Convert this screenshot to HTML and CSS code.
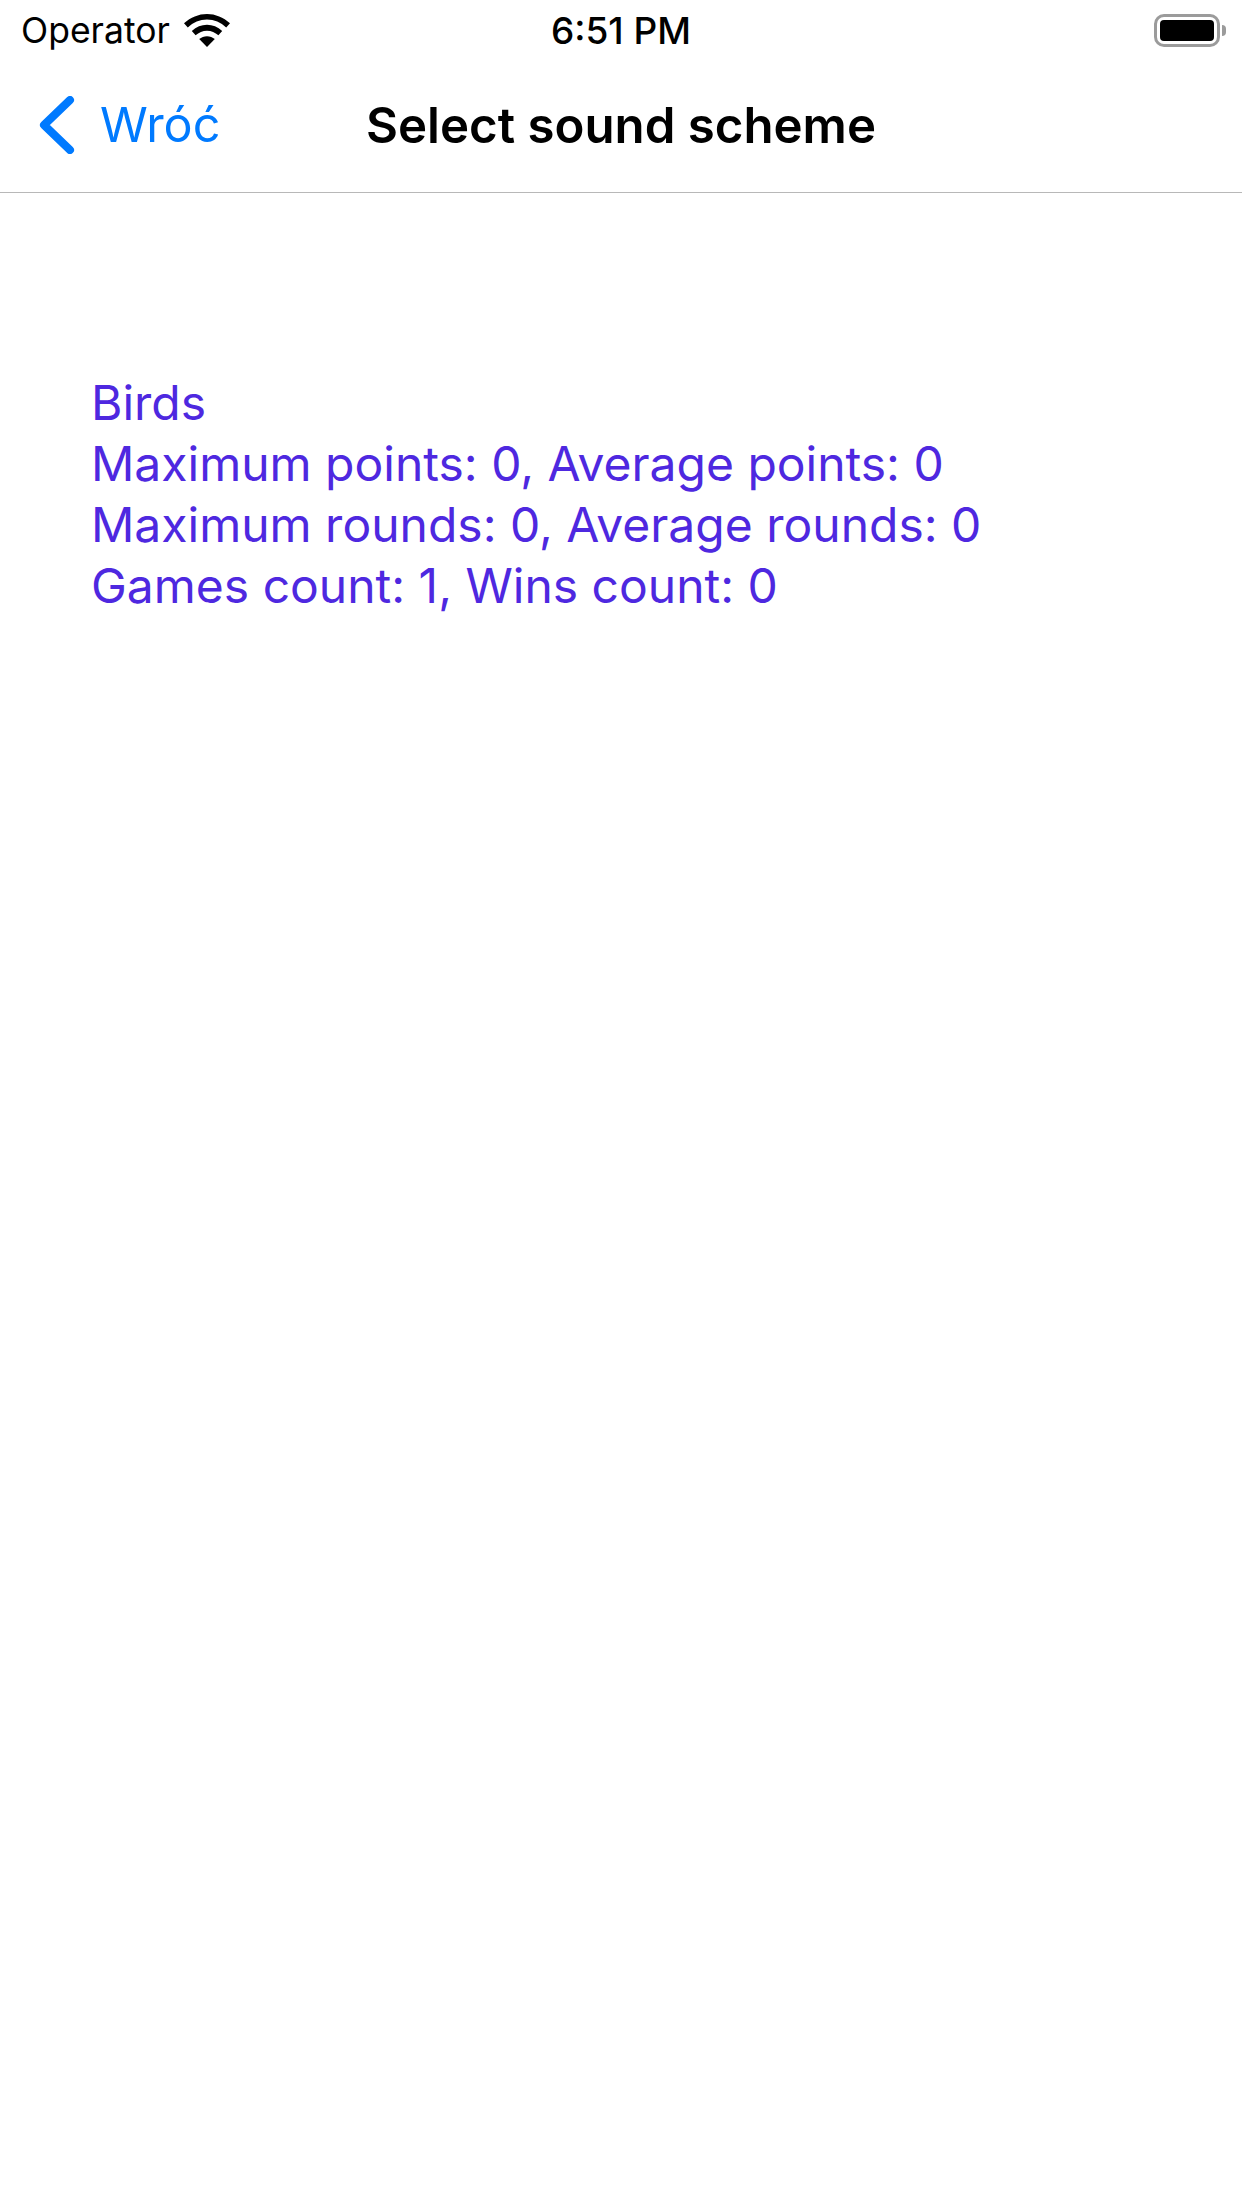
FILE: index.html
```html
<!DOCTYPE html>
<html>

<head>
    <title>Select sound scheme</title>
    <meta charset="UTF-8" />
    <link rel="stylesheet" href="styles.css">
</head>

<body>
    <div class="status-bar">
        <div class="status-left">
            <span class="operator">Operator</span>
            <svg class="wifi" width="46" height="33" viewBox="0 0 46 32" preserveAspectRatio="none">
                <path d="M23 0C14.500 0 6.700 3.300 0 9L3.800 13.200C9.200 8.200 15.800 5.400 23 5.400C30.200 5.400 36.800 8.200 42.200 13.200L46 9C39.300 3.300 31.500 0 23 0Z" />
                <path d="M23 10.500C17.400 10.500 12.300 12.600 7.800 16.500L11.600 20.700C14.800 17.900 18.700 16.200 23 16.200C27.300 16.200 31.200 17.900 34.400 20.700L38.200 16.500C33.700 12.600 28.600 10.500 23 10.500Z" />
                <path d="M23 21.500C20.100 21.500 17.400 22.500 15.200 24.300L23 32L30.800 24.300C28.600 22.500 25.900 21.500 23 21.500Z" />
            </svg>
        </div>
        <span class="clock">6:51 PM</span>
        <div class="battery">
            <div class="battery-body">
                <div class="battery-fill"></div>
            </div>
            <div class="battery-tip"></div>
        </div>
    </div>

    <div class="nav-bar">
        <div class="nav-back">
            <svg class="chevron" width="36" height="58" viewBox="0 0 36 58">
                <path d="M31 4L5 29L31 54" />
            </svg>
            <span class="back-label">Wróć</span>
        </div>
        <div class="nav-title">Select sound scheme</div>
        <div></div>
    </div>

    <div class="scheme-list">
        <div class="scheme-item">
            Birds<br/>
            Maximum points: 0, Average points: 0<br/>
            Maximum rounds: 0, Average rounds: 0<br/>
            Games count: 1, Wins count: 0
        </div>
    </div>
</body>

</html>
```

FILE: styles.css
```css
html,
body {
    margin: 0;
    padding: 0;
    background: #fff;
}

body {
    width: 1242px;
    height: 2208px;
    overflow: hidden;
    font-family: Inter, "Liberation Sans", sans-serif;
    color: #000;
}

.status-bar {
    height: 60px;
    display: grid;
    grid-template-columns: 1fr auto 1fr;
    align-items: center;
    padding: 2px 16px 0 16px;
    box-sizing: border-box;
}

.status-left {
    display: flex;
    align-items: center;
    gap: 14px;
    margin-left: 5px;
}

.operator {
    font-size: 35.500px;
    line-height: 58px;
}

.wifi {
    margin-top: -2px;
}

.clock {
    font-size: 37px;
    font-weight: 500;
    line-height: 58px;
}

.battery {
    justify-self: end;
    display: flex;
    align-items: center;
    margin-top: -2px;
}

.battery-body {
    width: 66px;
    height: 33px;
    padding: 3px;
    border: 3px solid #9b9b9b;
    border-radius: 10px;
    box-sizing: border-box;
}

.battery-fill {
    height: 100%;
    background: #000;
    border-radius: 4px;
}

.battery-tip {
    width: 4px;
    height: 11px;
    margin-left: 2px;
    background: #9b9b9b;
    border-radius: 0 6px 6px 0;
}

.nav-bar {
    height: 133px;
    display: grid;
    grid-template-columns: 1fr auto 1fr;
    align-items: center;
    padding: 0 0 3px 39px;
    border-bottom: 1px solid #b8b8b8;
    box-sizing: border-box;
}

.nav-back {
    display: flex;
    align-items: center;
    gap: 25px;
}

.chevron path {
    fill: none;
    stroke: #007aff;
    stroke-width: 8;
    stroke-linecap: round;
    stroke-linejoin: round;
}

.back-label {
    font-size: 48.500px;
    color: #007aff;
}

.nav-title {
    font-size: 49.200px;
    font-weight: 600;
    margin-left: -39px;
}

.scheme-list {
    padding: 179px 91px 0;
}

.scheme-item {
    font-size: 48px;
    line-height: 61px;
    color: #4e28e0;
}
```
